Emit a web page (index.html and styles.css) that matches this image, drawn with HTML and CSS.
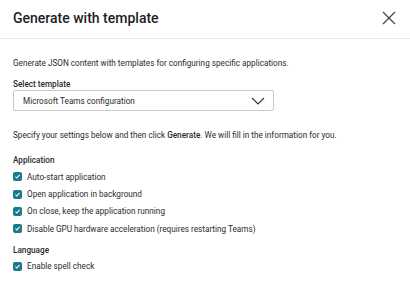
FILE: index.html
```html
<!DOCTYPE html>
<html>
<head>
<meta charset="utf-8">
<link rel="stylesheet" href="styles.css">
</head>
<body>
<div class="dialog">
  <header class="header">
    <h1 class="title">Generate with template</h1>
    <button class="close" aria-label="Close">
      <svg width="14" height="14" viewBox="0 0 14 14"><path d="M1 1L13 13M13 1L1 13" stroke="#444" stroke-width="1.2" fill="none"/></svg>
    </button>
  </header>
  <div class="body">
    <p class="intro">Generate JSON content with templates for configuring specific applications.</p>
    <div class="field">
      <label class="label">Select template</label>
      <div class="select">
        <span>Microsoft Teams configuration</span>
        <svg width="14" height="8" viewBox="0 0 14 8"><path d="M1 1L7 7L13 1" stroke="#333" stroke-width="1.1" fill="none"/></svg>
      </div>
    </div>
    <p class="info">Specify your settings below and then click <b>Generate</b>. We will fill in the information for you.</p>
    <div class="group">
      <div class="group-title">Application</div>
      <div class="check"><span class="box"><svg viewBox="0 0 10 10"><path d="M2.8 5.2L4.3 6.7L7.3 3.3" stroke="#fff" stroke-width="1.2" fill="none"/></svg></span>Auto-start application</div>
      <div class="check"><span class="box"><svg viewBox="0 0 10 10"><path d="M2.8 5.2L4.3 6.7L7.3 3.3" stroke="#fff" stroke-width="1.2" fill="none"/></svg></span>Open application in background</div>
      <div class="check"><span class="box"><svg viewBox="0 0 10 10"><path d="M2.8 5.2L4.3 6.7L7.3 3.3" stroke="#fff" stroke-width="1.2" fill="none"/></svg></span>On close, keep the application running</div>
      <div class="check"><span class="box"><svg viewBox="0 0 10 10"><path d="M2.8 5.2L4.3 6.7L7.3 3.3" stroke="#fff" stroke-width="1.2" fill="none"/></svg></span>Disable GPU hardware acceleration (requires restarting Teams)</div>
    </div>
    <div class="group">
      <div class="group-title">Language</div>
      <div class="check"><span class="box"><svg viewBox="0 0 10 10"><path d="M2.8 5.2L4.3 6.7L7.3 3.3" stroke="#fff" stroke-width="1.2" fill="none"/></svg></span>Enable spell check</div>
    </div>
  </div>
</div>
</body>
</html>
```
FILE: styles.css
```css
* { box-sizing: border-box; }
html, body { margin: 0; padding: 0; background: #fff; }
body {
  font-family: "Roboto", "Liberation Sans", sans-serif;
  color: #2b2b2b;
  width: 410px;
  height: 288px;
  overflow: hidden;
}
.dialog { display: flex; flex-direction: column; }
.header {
  height: 39px;
  border-bottom: 1px solid #e6e6e6;
  display: flex;
  align-items: center;
  justify-content: space-between;
  padding: 0 13px 3px 13px;
}
.title {
  margin: 0;
  font-size: 14px;
  font-weight: 500;
  color: #1e1e1e;
}
.close {
  border: 0;
  background: none;
  padding: 0;
  width: 14px;
  height: 14px;
  display: flex;
  margin-right: 1px;
}
.body { padding: 19px 13px 0 13px; font-size: 8.2px; }
.intro { margin: 0 0 11px 0; line-height: 10px; }
.field { display: flex; flex-direction: column; gap: 1px; }
.label { font-weight: 500; line-height: 10px; }
.select {
  width: 261px;
  height: 21px;
  border: 1px solid #c8c8c8;
  border-radius: 2px;
  display: flex;
  align-items: center;
  justify-content: space-between;
  padding: 0 8px 0 9px;
}
.info { margin: 19px 0 15px 0; line-height: 10px; }
.info b { font-weight: 500; }
.group { display: flex; flex-direction: column; }
.group + .group { margin-top: 7px; }
.group-title { font-weight: 500; line-height: 10px; margin-bottom: 3px; }
.check {
  display: flex;
  align-items: center;
  gap: 5px;
  height: 17.4px;
}
.box {
  width: 9px;
  height: 9px;
  border-radius: 2px;
  background: #197c8c;
  display: flex;
}
.box svg { width: 9px; height: 9px; }
```
